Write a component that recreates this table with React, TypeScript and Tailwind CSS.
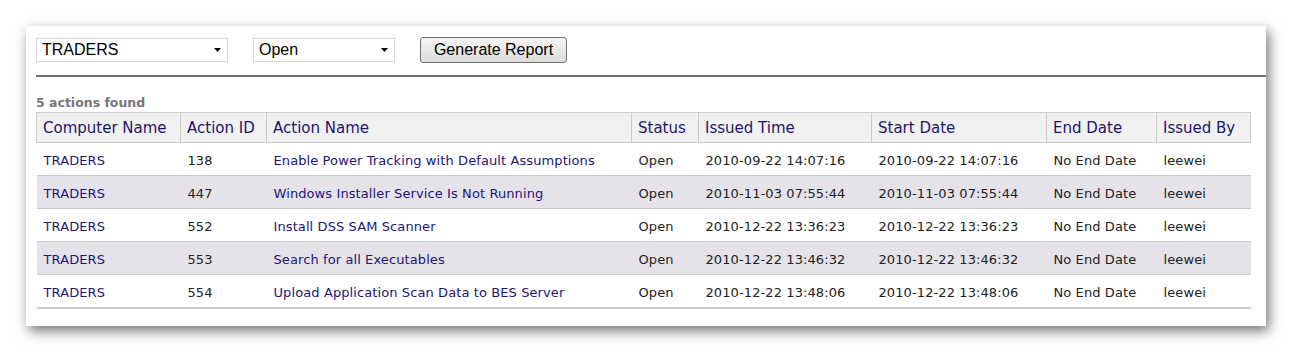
import React from 'react';

interface ActionRow {
  computer: string;
  id: number;
  name: string;
  status: string;
  issued: string;
  start: string;
  end: string;
  by: string;
}

const rows: ActionRow[] = [
  { computer: 'TRADERS', id: 138, name: 'Enable Power Tracking with Default Assumptions', status: 'Open', issued: '2010-09-22 14:07:16', start: '2010-09-22 14:07:16', end: 'No End Date', by: 'leewei' },
  { computer: 'TRADERS', id: 447, name: 'Windows Installer Service Is Not Running', status: 'Open', issued: '2010-11-03 07:55:44', start: '2010-11-03 07:55:44', end: 'No End Date', by: 'leewei' },
  { computer: 'TRADERS', id: 552, name: 'Install DSS SAM Scanner', status: 'Open', issued: '2010-12-22 13:36:23', start: '2010-12-22 13:36:23', end: 'No End Date', by: 'leewei' },
  { computer: 'TRADERS', id: 553, name: 'Search for all Executables', status: 'Open', issued: '2010-12-22 13:46:32', start: '2010-12-22 13:46:32', end: 'No End Date', by: 'leewei' },
  { computer: 'TRADERS', id: 554, name: 'Upload Application Scan Data to BES Server', status: 'Open', issued: '2010-12-22 13:48:06', start: '2010-12-22 13:48:06', end: 'No End Date', by: 'leewei' },
];

const headers = ['Computer Name', 'Action ID', 'Action Name', 'Status', 'Issued Time', 'Start Date', 'End Date', 'Issued By'];
const widths = [144, 86, 365, 67, 173, 175, 110, 94];

function Select({ value, width }: { value: string; width: string }) {
  return (
    <div className={`${width} mt-[1px] h-[24px] border border-[#d5d8e0] bg-white flex items-center justify-between pl-[5px] pr-[6px]`}>
      <span className="text-[16px] text-black font-['Liberation_Sans',Arial,sans-serif]">{value}</span>
      <svg width="7" height="4" viewBox="0 0 7 4">
        <path d="M0 0h7L3.5 4z" fill="#000" />
      </svg>
    </div>
  );
}

export default function App() {
  return (
    <div className="w-[1292px] h-[353px] bg-white pt-[26px] pl-[26px]">
      <div className="w-[1240px] h-[300px] bg-white shadow-[3px_5px_12px_rgba(0,0,0,0.55)]">
        <div className="flex items-start pl-[10px] pt-[11px] h-[49px]">
          <Select value="TRADERS" width="w-[192px]" />
          <div className="w-[25px]" />
          <Select value="Open" width="w-[142px]" />
          <button className="ml-[25px] h-[26px] w-[147px] rounded-[3px] border border-[#707070] bg-gradient-to-b from-[#f4f4f4] to-[#dcdcdc] text-[16px] text-black font-['Liberation_Sans',Arial,sans-serif]">
            Generate Report
          </button>
        </div>
        <div className="ml-[10px] h-[2px] bg-[#707070]" />
        <div className="px-[10px] font-['DejaVu_Sans',Verdana,sans-serif]">
          <div className="pt-[17px] h-[35px] text-[12.5px] font-bold text-[#777777] leading-[18px]">5 actions found</div>
          <table className="table-fixed border-collapse w-[1214px]">
            <colgroup>
              {widths.map((w, i) => (
                <col key={i} style={{ width: w }} />
              ))}
            </colgroup>
            <thead>
              <tr className="h-[30px] bg-[#f1f1f1]">
                {headers.map((h) => (
                  <th key={h} className="border border-[#cccccc] px-[6px] pt-[2px] text-left font-normal text-[15px] text-[#1e1470] whitespace-nowrap">
                    {h}
                  </th>
                ))}
              </tr>
            </thead>
            <tbody className="text-[13px] tracking-[0.1px]">
              {rows.map((r, i) => (
                <tr key={r.id} className={`h-[33px] border-b border-[#cccccc] ${i % 2 === 1 ? 'bg-[#e5e3e9]' : 'bg-white'} ${i === rows.length - 1 ? 'border-b-2' : ''}`}>
                  <td className="px-[7px] pt-[3px] text-[#231578]">{r.computer}</td>
                  <td className="px-[7px] pt-[3px] text-[#222]">{r.id}</td>
                  <td className="px-[7px] pt-[3px] text-[#231578] whitespace-nowrap">{r.name}</td>
                  <td className="px-[7px] pt-[3px] text-[#222]">{r.status}</td>
                  <td className="px-[7px] pt-[3px] text-[#222] whitespace-nowrap">{r.issued}</td>
                  <td className="px-[7px] pt-[3px] text-[#222] whitespace-nowrap">{r.start}</td>
                  <td className="px-[7px] pt-[3px] text-[#222] whitespace-nowrap">{r.end}</td>
                  <td className="px-[7px] pt-[3px] text-[#222]">{r.by}</td>
                </tr>
              ))}
            </tbody>
          </table>
        </div>
      </div>
    </div>
  );
}
